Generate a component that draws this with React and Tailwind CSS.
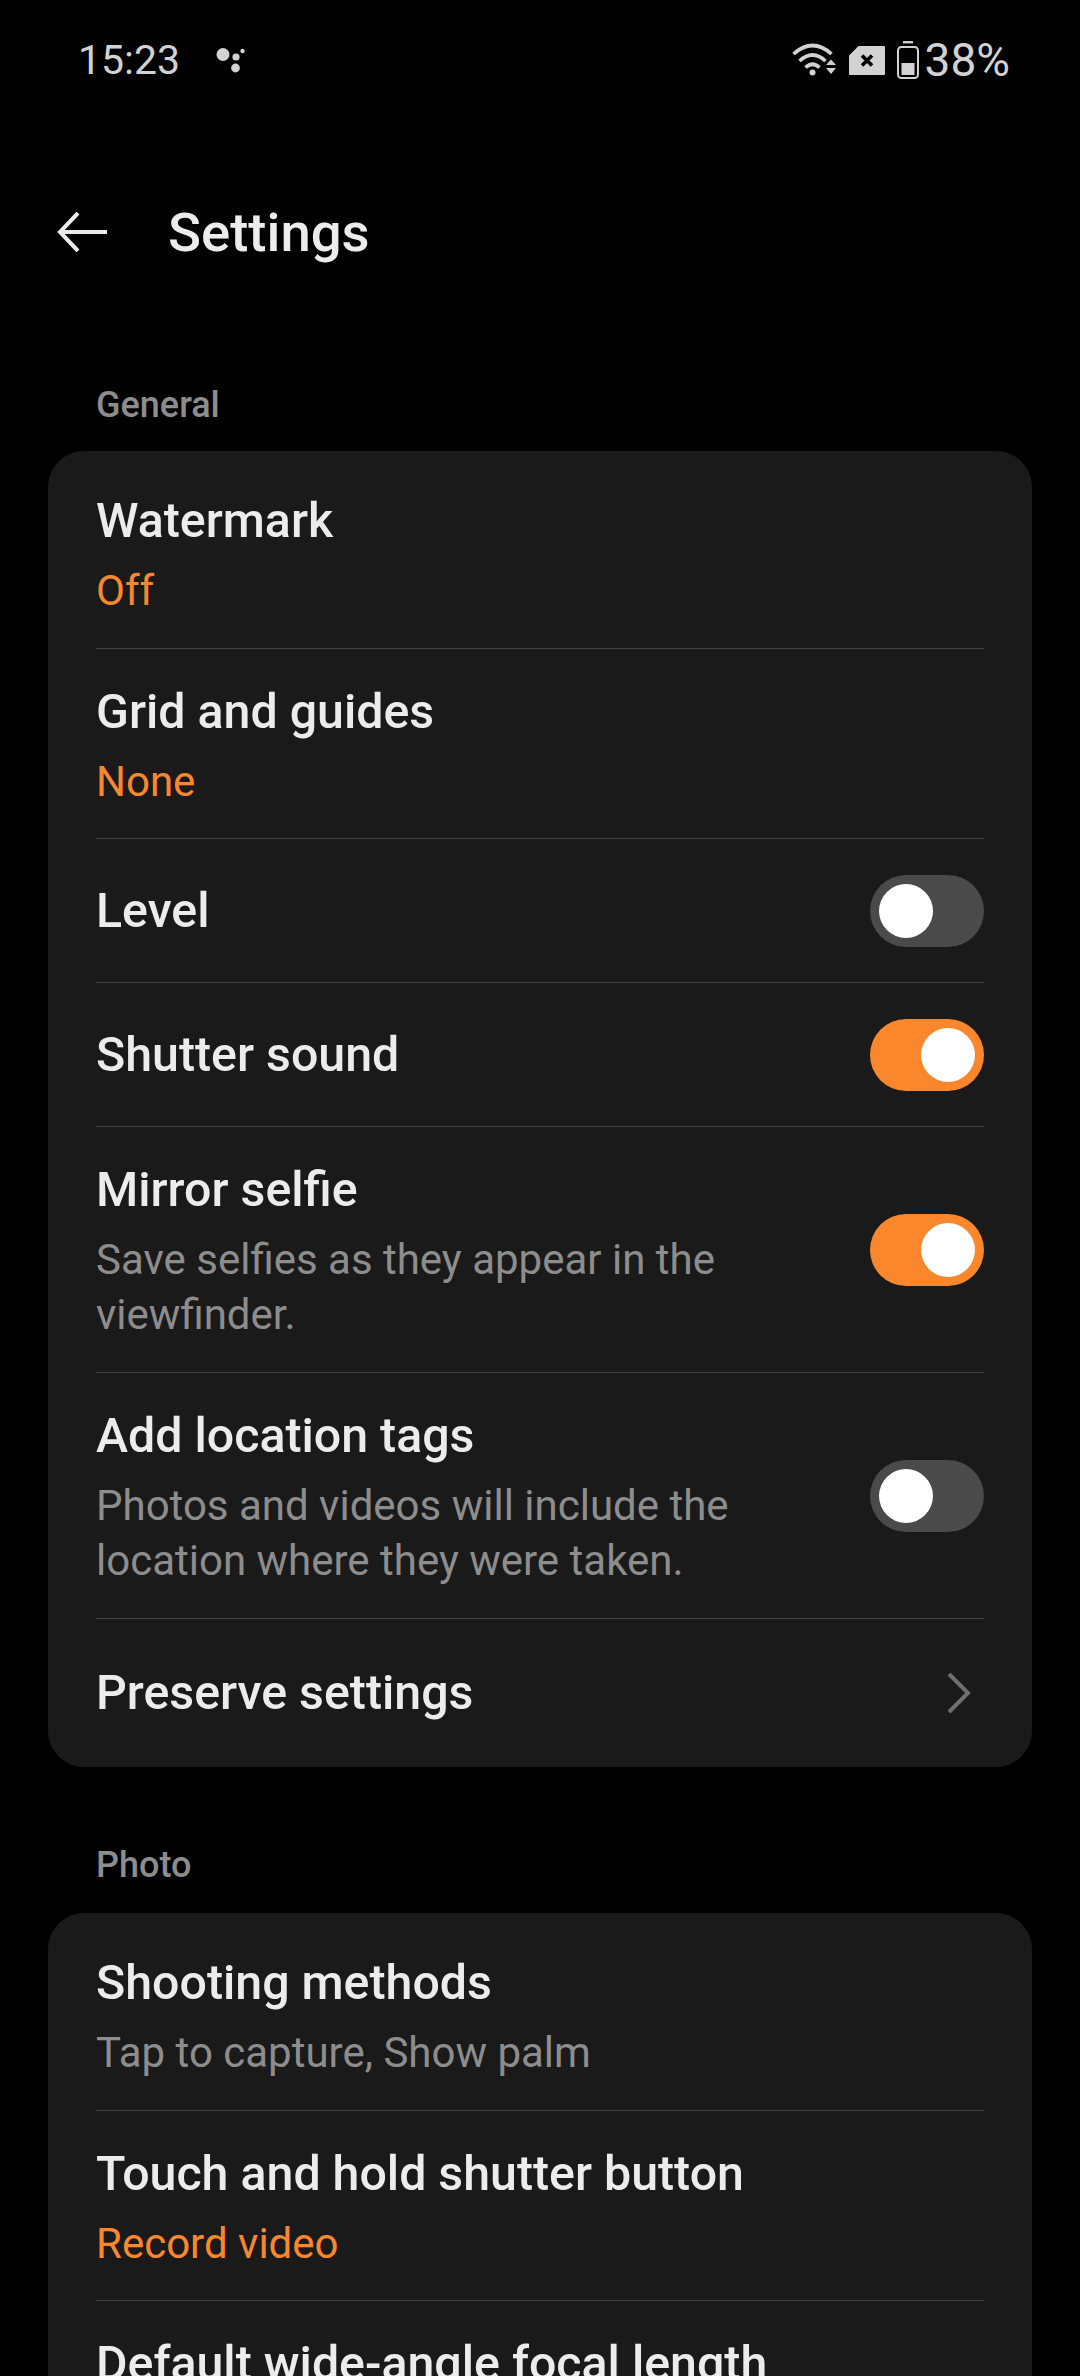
import React from "react";

function Toggle({ on, up }) {
  return (
    <div className={`flex h-[72px] w-[114px] shrink-0 items-center rounded-full px-[9px] ${up ? "mb-[4px]" : ""} ${on ? "justify-end bg-[#fb872d]" : "justify-start bg-[#4a4a4a]"}`}>
      <div className="h-[54px] w-[54px] rounded-full bg-white" />
    </div>
  );
}

function Chevron() {
  return (
    <svg width="24" height="42" viewBox="0 0 24 42" fill="none" className="mr-[13px] shrink-0">
      <path d="M2 2 L21 21 L2 40" stroke="#6f6f6f" strokeWidth="4" />
    </svg>
  );
}

function Row({ title, value, desc, right, last, pt, pb, rowH }) {
  return (
    <div className="px-12">
      <div
        className={`flex items-center justify-between ${pt} ${pb} ${rowH} ${last ? "" : "border-b border-[#444444]"}`}
      >
        <div className="flex min-w-0 flex-col">
          <div className="text-[48.3px] font-medium leading-[56px] text-[#ececec] whitespace-nowrap">{title}</div>
          {value && <div className="mt-[14px] text-[42px] leading-[55px] text-[#fb872d] whitespace-nowrap">{value}</div>}
          {desc && (
            <div className="mt-[14px] text-[42px] leading-[55px] text-[#8d8d8d] whitespace-pre-line">{desc}</div>
          )}
        </div>
        {right}
      </div>
    </div>
  );
}

function StatusBar() {
  return (
    <div className="flex h-[120px] items-center justify-between pl-[78px] pr-[70px] text-[#d2d2d2]">
      <div className="flex items-center">
        <span className="text-[41px] leading-none">15:23</span>
        <svg width="30" height="26" viewBox="0 0 30 26" className="ml-[36px]" fill="#d2d2d2">
          <circle cx="7" cy="7.5" r="6.5" />
          <circle cx="20" cy="10" r="3.6" />
          <circle cx="19.5" cy="21" r="4.4" />
          <circle cx="26.5" cy="4" r="2.2" />
        </svg>
      </div>
      <div className="flex items-center">
        <svg width="44" height="34" viewBox="0 0 44 34" fill="none" stroke="#d2d2d2" strokeWidth="3.6">
          <path d="M1.5 11 Q20.5 -6 39.5 11" />
          <path d="M7.5 18 Q20.5 6 33.5 18" />
          <path d="M13.5 24.5 Q20.5 18 27.5 24.5" />
          <circle cx="20.5" cy="29.5" r="3" fill="#d2d2d2" stroke="none" />
          <path d="M34 22 L39 16.5 L44 22 Z M34 25 L39 31 L44 25 Z" fill="#d2d2d2" stroke="none" />
        </svg>
        <svg width="36" height="29" viewBox="0 0 36 29" className="ml-[13px]">
          <path d="M10 1 H35 V28 H1 V10 Z" fill="#d2d2d2" stroke="#d2d2d2" strokeWidth="2" strokeLinejoin="round" />
          <path d="M13 9.5 L23 19.5 M23 9.5 L13 19.5" stroke="#000" strokeWidth="3.6" />
        </svg>
        <svg width="22" height="38" viewBox="0 0 22 38" className="ml-[12px]" fill="none">
          <rect x="6" y="0" width="10" height="2.4" fill="#d2d2d2" />
          <rect x="1" y="6" width="20" height="31" rx="3.5" stroke="#d2d2d2" strokeWidth="2" />
          <rect x="4.5" y="22" width="13" height="12" fill="#d2d2d2" />
        </svg>
        <span className="ml-[6px] text-[46px] leading-none">38%</span>
      </div>
    </div>
  );
}

export default function App() {
  return (
    <div
      className="h-[2376px] w-[1080px] overflow-hidden bg-black"
      style={{ fontFamily: "Roboto, sans-serif" }}
    >
      <StatusBar />
      <div className="flex h-[224px] items-center pl-[57px]">
        <svg width="50" height="40" viewBox="0 0 50 40" fill="none" stroke="#ececec" strokeWidth="4">
          <path d="M50 20 H3" />
          <path d="M21 1 L3 20 L21 39" />
        </svg>
        <span className="ml-[61px] text-[54.5px] font-medium leading-none text-[#ececec]">Settings</span>
      </div>

      <div className="mt-[39px] mb-6 pl-24 text-[36px] font-medium leading-[44px] text-[#8d8d8d]">General</div>
      <div className="mx-12 rounded-[36px] bg-[#1a1a1a]">
        <Row title="Watermark" value="Off" pt="pt-[42px]" pb="pb-[30px]" />
        <Row title="Grid and guides" value="None" pt="pt-[35px]" pb="pb-[29px]" />
        <Row title="Level" rowH="h-[144px]" right={<Toggle />} />
        <Row title="Shutter sound" rowH="h-[144px]" right={<Toggle on />} />
        <Row title="Mirror selfie" desc={"Save selfies as they appear in the\nviewfinder."} pt="pt-[35px]" pb="pb-[30px]" right={<Toggle on up />} />
        <Row title="Add location tags" desc={"Photos and videos will include the\nlocation where they were taken."} pt="pt-[35px]" pb="pb-[30px]" right={<Toggle up />} />
        <Row title="Preserve settings" rowH="h-[148px]" right={<Chevron />} last />
      </div>

      <div className="mt-[76px] mb-[26px] pl-24 text-[36px] font-medium leading-[44px] text-[#8d8d8d]">Photo</div>
      <div className="mx-12 rounded-t-[36px] bg-[#1a1a1a] pb-[100px]">
        <Row title="Shooting methods" desc="Tap to capture, Show palm" pt="pt-[42px]" pb="pb-[30px]" />
        <Row title="Touch and hold shutter button" value="Record video" pt="pt-[35px]" pb="pb-[29px]" />
        <Row title="Default wide-angle focal length" pt="pt-[35px]" last />
      </div>
    </div>
  );
}
